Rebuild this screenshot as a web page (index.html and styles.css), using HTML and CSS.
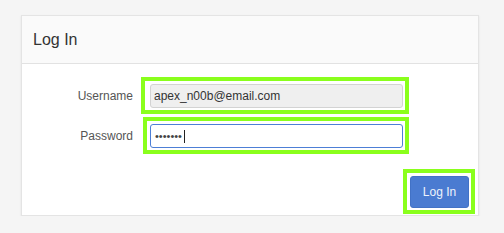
FILE: index.html
```html
<!DOCTYPE html>
<html lang="en">
<head>
  <meta charset="UTF-8">
  <title>Log In</title>
  <meta name="viewport" content="width=device-width, initial-scale=1.0">
  <link rel="stylesheet" href="styles.css">
</head>
<body>
  <div class="panel">
    <div class="panel-heading">Log In</div>

    <form class="panel-body" onsubmit="return false">
      <div class="form-row">
        <label class="form-label" for="username">Username</label>
        <span class="mark mark-wide">
          <input class="field field-readonly" id="username" type="text" value="apex_n00b@email.com" readonly>
        </span>
      </div>

      <div class="form-row">
        <label class="form-label form-label-pw" for="password">Password</label>
        <span class="mark">
          <div class="field field-focus" id="password"><span class="dots">&bull;&bull;&bull;&bull;&bull;&bull;&bull;</span><span class="caret"></span></div>
        </span>
      </div>

      <div class="actions">
        <span class="mark">
          <button class="btn" type="submit">Log In</button>
        </span>
      </div>
    </form>
  </div>
</body>
</html>
```

FILE: styles.css
```css
* {
  box-sizing: border-box;
}

body {
  font-family: 'Liberation Sans', Arial, sans-serif;
  background: #f5f5f5;
  color: #333;
  margin: 0;
  padding: 15px 25px 0 21px;
}

.panel {
  width: 458px;
  background: #fff;
  border: 1px solid #e4e4e4;
  box-shadow: 0 1px 2px rgba(0, 0, 0, 0.08);
}

.panel-heading {
  background: #fafafa;
  border-bottom: 1px solid #e2e2e2;
  font-size: 16px;
  line-height: 17px;
  padding: 15px 11px;
  color: #333;
}

.panel-body {
  margin: 0;
  padding: 13px 3px 1px 11px;
}

.form-row {
  display: flex;
  align-items: center;
  margin-bottom: 3px;
}

.form-label {
  width: 100px;
  margin-right: 8px;
  text-align: right;
  font-size: 12px;
  color: #555;
}

.form-label-pw {
  margin-right: 10px;
}

/* lime highlight boxes */
.mark {
  display: inline-block;
  border: 4px solid #8aff1c;
  padding: 3px 2px 2px 3px;
}

.mark-wide {
  padding-left: 5px;
}

.field {
  display: block;
  width: 253px;
  height: 24px;
  margin: 0;
  padding: 0 3px;
  font-family: inherit;
  font-size: 12px;
  color: #333;
  border: 1px solid #d3d3d3;
  border-radius: 3px;
  outline: none;
}

.field-readonly {
  background: #efefef;
}

.field-focus {
  display: flex;
  align-items: center;
  background: #fff;
  border-color: #4d7fd6;
}

.dots {
  font-size: 11px;
  color: #444;
  padding-left: 1px;
}

.caret {
  width: 1px;
  height: 13px;
  margin-left: 2px;
  background: #222;
}

.actions {
  display: flex;
  justify-content: flex-end;
  margin-top: 15px;
}

.btn {
  display: block;
  width: 59px;
  height: 32px;
  padding: 0;
  font-family: inherit;
  font-size: 12px;
  color: #eef3fc;
  background: #4a7bd1;
  border: 1px solid #4272c6;
  border-radius: 3px;
  cursor: pointer;
}
```
